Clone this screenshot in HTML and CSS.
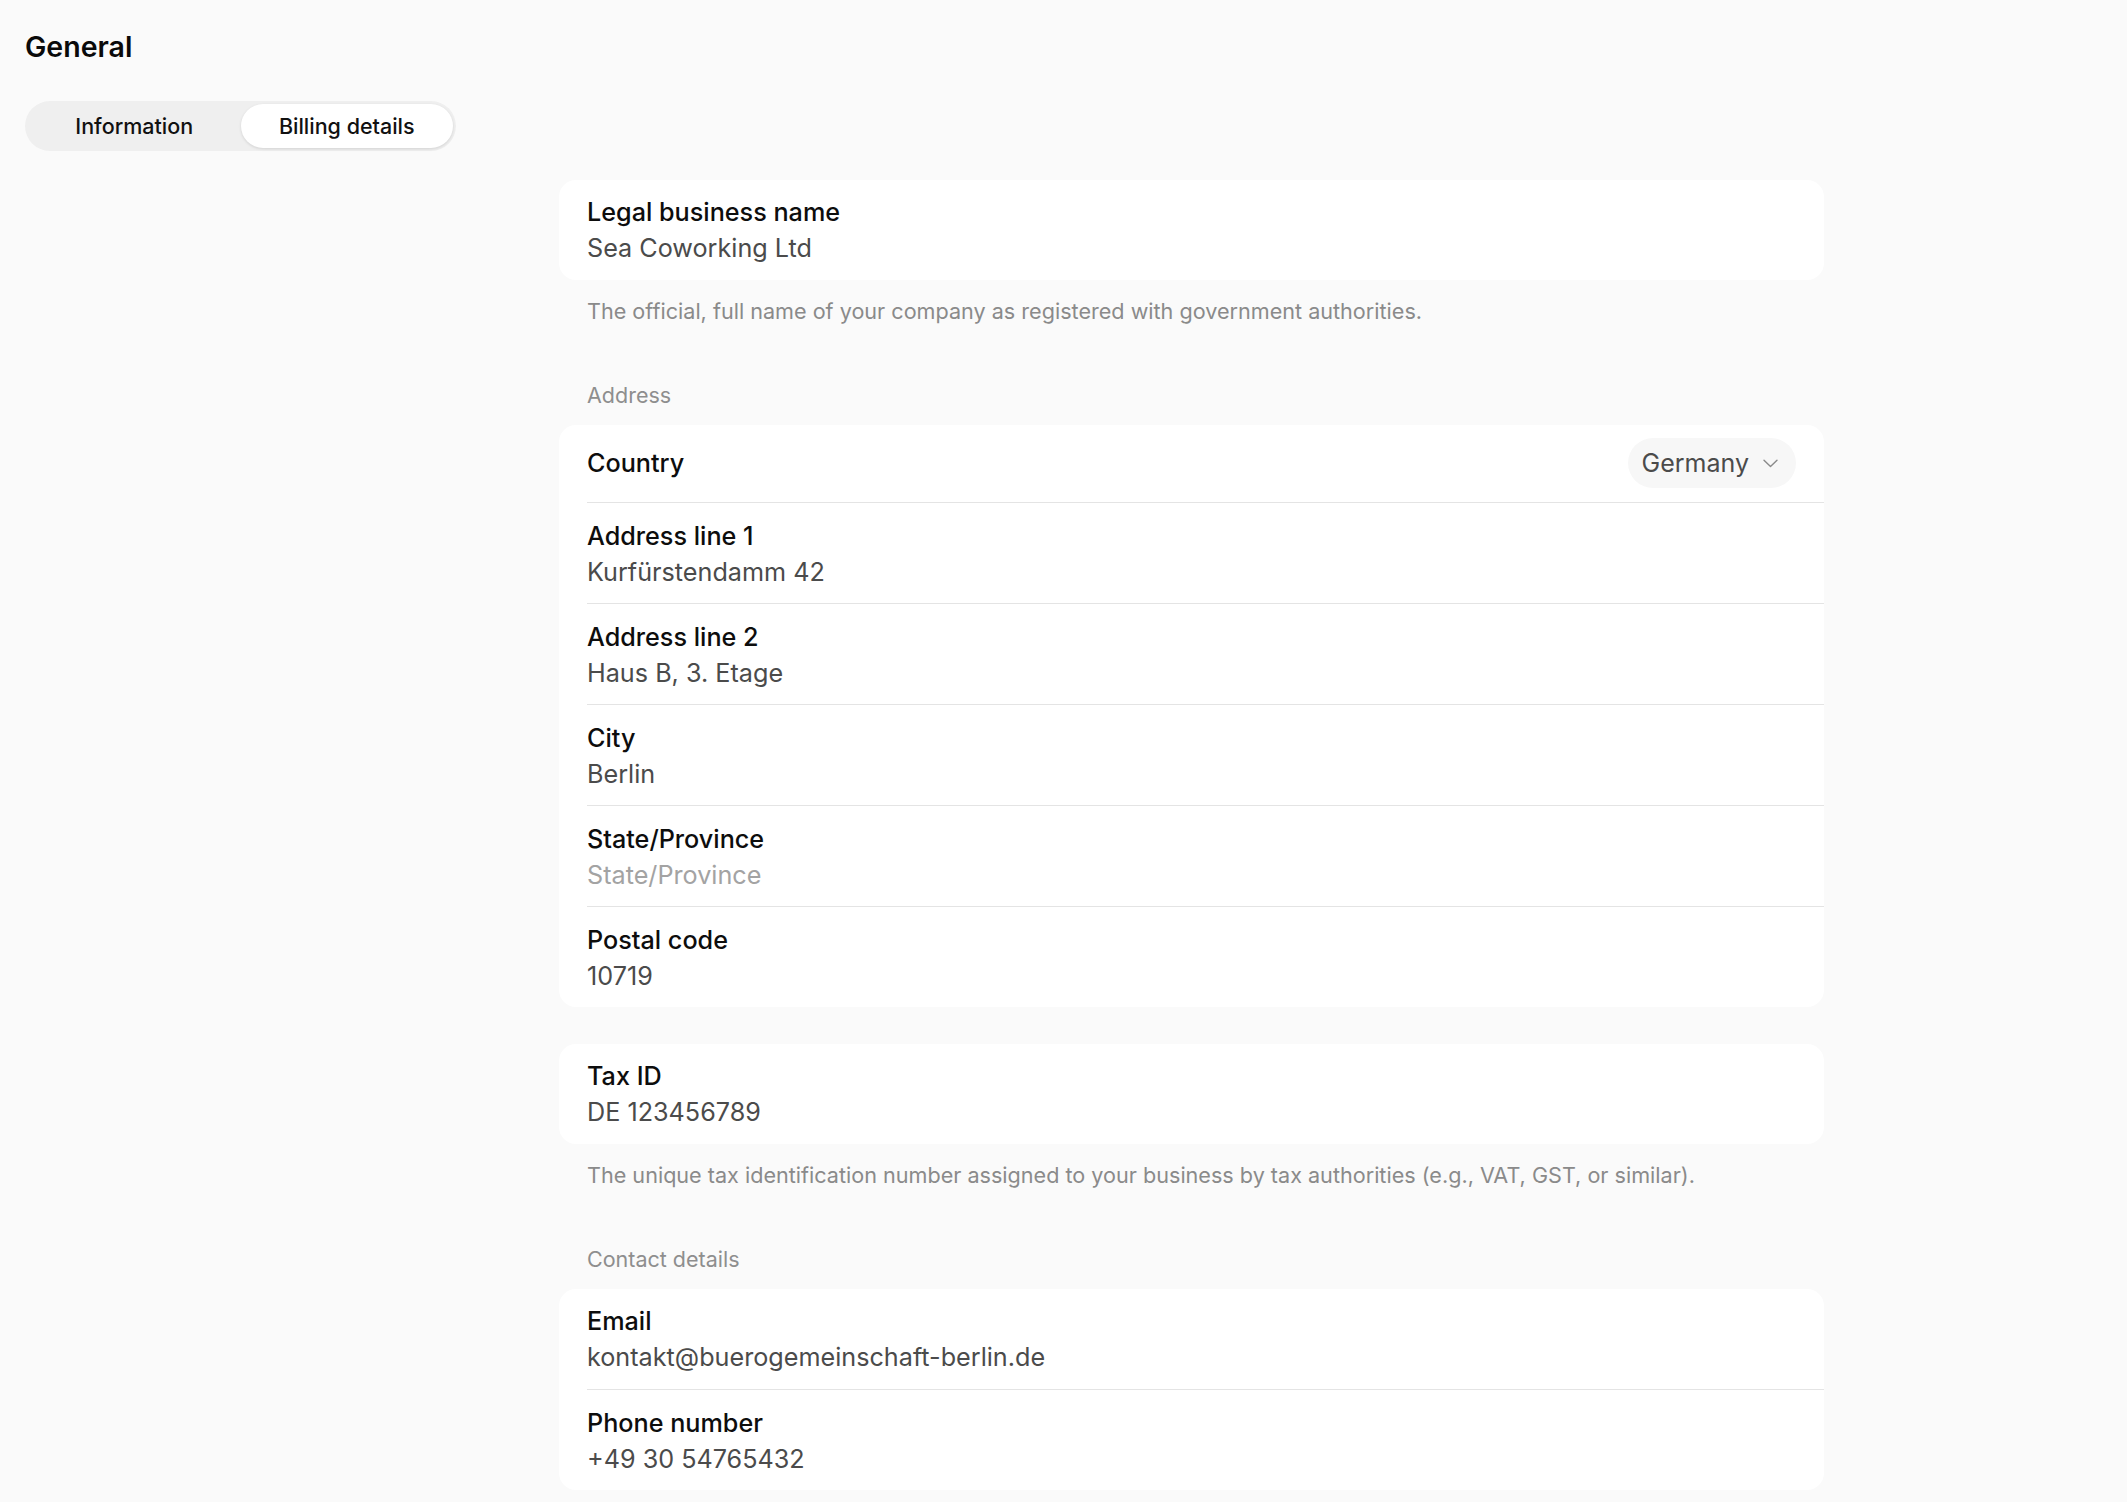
FILE: index.html
```html
<!DOCTYPE html>
<html>

<head>
  <title>General - Billing details</title>
  <meta charset="UTF-8">
  <link rel="stylesheet" href="styles.css">
</head>

<body>
  <div class="page">
    <h1 class="pageTitle">General</h1>

    <div class="tabs">
      <button class="tab">Information</button>
      <button class="tab tabActive">Billing details</button>
    </div>

    <div class="form">

      <div class="group">
        <div class="card">
          <div class="row">
            <p class="label">Legal business name</p>
            <p class="value">Sea Coworking Ltd</p>
          </div>
        </div>
        <p class="hint">The official, full name of your company as registered with government authorities.</p>
      </div>

      <div class="group">
        <p class="groupTitle">Address</p>
        <div class="card">
          <div class="row rowInline">
            <p class="label">Country</p>
            <button class="select">
              Germany
              <svg width="15" height="9" viewBox="0 0 15 9" fill="none">
                <path d="M1 1.2L7.5 7.5L14 1.2" stroke="#8a8a8a" stroke-width="1.4" stroke-linecap="round" stroke-linejoin="round" />
              </svg>
            </button>
          </div>
          <div class="row">
            <p class="label">Address line 1</p>
            <p class="value">Kurfürstendamm 42</p>
          </div>
          <div class="row">
            <p class="label">Address line 2</p>
            <p class="value">Haus B, 3. Etage</p>
          </div>
          <div class="row">
            <p class="label">City</p>
            <p class="value">Berlin</p>
          </div>
          <div class="row">
            <p class="label">State/Province</p>
            <p class="value placeholder">State/Province</p>
          </div>
          <div class="row">
            <p class="label">Postal code</p>
            <p class="value">10719</p>
          </div>
        </div>
      </div>

      <div class="group">
        <div class="card">
          <div class="row">
            <p class="label">Tax ID</p>
            <p class="value">DE 123456789</p>
          </div>
        </div>
        <p class="hint">The unique tax identification number assigned to your business by tax authorities (e.g., VAT, GST, or similar).</p>
      </div>

      <div class="group">
        <p class="groupTitle">Contact details</p>
        <div class="card">
          <div class="row">
            <p class="label">Email</p>
            <p class="value">kontakt@buerogemeinschaft-berlin.de</p>
          </div>
          <div class="row">
            <p class="label">Phone number</p>
            <p class="value">+49 30 54765432</p>
          </div>
        </div>
      </div>

    </div>
  </div>
</body>

</html>
```

FILE: styles.css
```css
body {
  margin: 0;
  background-color: #fafafa;
  font-family: Inter, "Noto Sans", sans-serif;
  color: #111111;
}

p {
  margin: 0;
}

.page {
  padding: 30px 24px 0px 25px;
}

.pageTitle {
  margin: 0;
  font-size: 28.5px;
  line-height: 34px;
  font-weight: 600;
  color: #0a0a0a;
}

.tabs {
  margin-top: 37px;
  width: 425px;
  padding: 3px;
  display: grid;
  grid-template-columns: 1fr 1fr;
  background-color: #efefef;
  border-radius: 25px;
}

.tab {
  height: 44px;
  border: none;
  border-radius: 22px;
  background: none;
  font-family: inherit;
  font-size: 21.5px;
  font-weight: 500;
  color: #111111;
}

.tabActive {
  background-color: #ffffff;
  box-shadow: 0px 1px 3px rgba(0, 0, 0, 0.12);
}

.form {
  margin: 29px 0px 0px 534px;
  width: 1265px;
  display: flex;
  flex-direction: column;
  gap: 37px;
}

.group {
  display: flex;
  flex-direction: column;
}

.card {
  background-color: #ffffff;
  border-radius: 17px;
}

.row {
  padding: 15px 28px;
}

/* divider starts at the text, runs to the card edge */
.row + .row {
  border-top: 1px solid #e4e4e4;
  margin-left: 28px;
  padding-left: 0px;
  padding-top: 16px;
  padding-bottom: 14px;
}

.rowInline {
  display: flex;
  align-items: center;
  justify-content: space-between;
  padding-top: 13px;
  padding-bottom: 14px;
}

.label {
  font-size: 25.2px;
  line-height: 34px;
  font-weight: 500;
  color: #0d0d0d;
}

.value {
  margin-top: 2px;
  font-size: 25.2px;
  line-height: 34px;
  color: #4b4b4b;
}

.placeholder {
  color: #a3a3a3;
}

.select {
  height: 50px;
  padding: 0px 18px 0px 14px;
  display: flex;
  align-items: center;
  gap: 14px;
  border: none;
  border-radius: 25px;
  background-color: #f7f7f7;
  font-family: inherit;
  font-size: 25px;
  color: #4b4b4b;
}

.hint {
  padding: 17px 28px 0px 28px;
  margin-bottom: 16px;
  font-size: 21.6px;
  line-height: 28px;
  color: #8a8a8a;
}

.groupTitle {
  padding: 3px 28px 16px 28px;
  font-size: 21.5px;
  line-height: 28px;
  color: #8e8e8e;
}
```
